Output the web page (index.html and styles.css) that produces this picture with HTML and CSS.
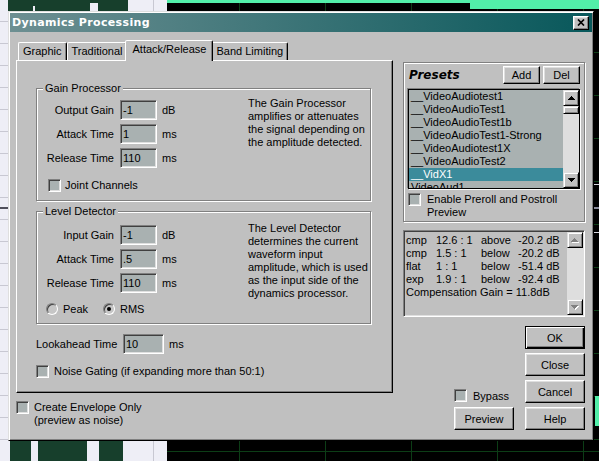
FILE: index.html
```html
<!DOCTYPE html>
<html lang="en">

<head>
    <meta charset="UTF-8">
    <meta name="viewport" content="width=device-width, initial-scale=1.0">
    <title>Dynamics Processing</title>
    <link rel="stylesheet" href="styles.css">
</head>

<body>

    <div class="dialog">
        <div class="titlebar">
            <span class="title">Dynamics Processing</span>
            <span class="close-btn">
                <svg width="8" height="7" viewBox="0 0 8 7"><path d="M1 0.5 7 6.5M7 0.5 1 6.5" stroke="#000" stroke-width="1.7"/></svg>
            </span>
        </div>
        <div class="client">
            <div class="left-col">
                <div class="tabs">
                    <div class="tab">Graphic</div>
                    <div class="tab">Traditional</div>
                    <div class="tab active">Attack/Release</div>
                    <div class="tab">Band Limiting</div>
                </div>
                <div class="tab-panel">
                    <div class="group gain-group">
                        <div class="group-label">Gain Processor</div>
                        <div class="group-body">
                            <div class="controls">
                                <div class="row"><span class="lbl">Output Gain</span><span class="field">-1</span><span class="unit">dB</span></div>
                                <div class="row"><span class="lbl">Attack Time</span><span class="field">1</span><span class="unit">ms</span></div>
                                <div class="row"><span class="lbl">Release Time</span><span class="field">110</span><span class="unit">ms</span></div>
                                <div class="row check-row"><span class="checkbox"></span>Joint Channels</div>
                            </div>
                            <p class="desc">The Gain Processor<br>amplifies or attenuates<br>the signal depending on<br>the amplitude detected.</p>
                        </div>
                    </div>
                    <div class="group level-group">
                        <div class="group-label">Level Detector</div>
                        <div class="group-body">
                            <div class="controls">
                                <div class="row"><span class="lbl">Input Gain</span><span class="field">-1</span><span class="unit">dB</span></div>
                                <div class="row"><span class="lbl">Attack Time</span><span class="field">.5</span><span class="unit">ms</span></div>
                                <div class="row"><span class="lbl">Release Time</span><span class="field">110</span><span class="unit">ms</span></div>
                                <div class="row radio-row">
                                    <span class="option"><span class="radio"></span>Peak</span>
                                    <span class="option"><span class="radio checked"></span>RMS</span>
                                </div>
                            </div>
                            <p class="desc">The Level Detector<br>determines the current<br>waveform input<br>amplitude, which is used<br>as the input side of the<br>dynamics processor.</p>
                        </div>
                    </div>
                    <div class="row lookahead-row">
                        <span class="lbl-wide">Lookahead Time</span><span class="field wide">10</span><span class="unit">ms</span>
                    </div>
                    <div class="row noise-row"><span class="checkbox"></span>Noise Gating (if expanding more than 50:1)</div>
                </div>
                <div class="envelope">
                    <span class="checkbox"></span>
                    <span class="envelope-text">Create Envelope Only<br>(preview as noise)</span>
                </div>
            </div>

            <div class="right-col">
                <div class="presets">
                    <div class="presets-head">
                        <span class="presets-title">Presets</span>
                        <span class="small-btn">Add</span>
                        <span class="small-btn">Del</span>
                    </div>
                    <div class="preset-list">
                        <div class="items">
                            <div class="item">__VideoAudiotest1</div>
                            <div class="item">__VideoAudioTest1</div>
                            <div class="item">__VideoAudioTest1b</div>
                            <div class="item">__VideoAudioTest1-Strong</div>
                            <div class="item">__VideoAudiotest1X</div>
                            <div class="item">__VideoAudioTest2</div>
                            <div class="item selected">__VidX1</div>
                            <div class="item">VideoAud1</div>
                        </div>
                        <div class="vscroll">
                            <span class="sb-btn"><svg width="7" height="4" viewBox="0 0 7 4"><path d="M3 0h1v1h1v1h1v1h1v1H0V3h1V2h1V1h1z"/></svg></span>
                            <span class="sb-thumb"></span>
                            <span class="sb-track"></span>
                            <span class="sb-btn"><svg width="7" height="4" viewBox="0 0 7 4"><path d="M0 0h7v1H6v1H5v1H4v1H3V3H2V2H1V1H0z"/></svg></span>
                        </div>
                    </div>
                    <div class="preroll">
                        <span class="checkbox"></span>
                        <span class="preroll-text">Enable Preroll and Postroll<br>Preview</span>
                    </div>
                </div>

                <div class="info-box">
                    <div class="info-text">
                        <span>cmp</span><span>12.6 : 1</span><span>above</span><span>-20.2 dB</span>
                        <span>cmp</span><span>1.5 : 1</span><span>below</span><span>-20.2 dB</span>
                        <span>flat</span><span>1 : 1</span><span>below</span><span>-51.4 dB</span>
                        <span>exp</span><span>1.9 : 1</span><span>below</span><span>-92.4 dB</span>
                        <span class="span-all">Compensation Gain = 11.8dB</span>
                    </div>
                    <div class="vscroll">
                        <span class="sb-btn"><svg width="8" height="5" viewBox="0 0 8 5"><path fill="#fff" d="M4 1h1v1h1v1h1v1h1v1H1V4h1V3h1V2h1z"/><path fill="#808080" d="M3 0h1v1h1v1h1v1h1v1H0V3h1V2h1V1h1z"/></svg></span>
                        <span class="sb-track"></span>
                        <span class="sb-btn"><svg width="8" height="5" viewBox="0 0 8 5"><path fill="#fff" d="M1 1h7v1H7v1H6v1H5v1H4V4H3V3H2V2H1z"/><path fill="#808080" d="M0 0h7v1H6v1H5v1H4v1H3V3H2V2H1V1H0z"/></svg></span>
                    </div>
                </div>

                <div class="actions">
                    <div class="side">
                        <div class="bypass"><span class="checkbox"></span>Bypass</div>
                        <span class="btn">Preview</span>
                    </div>
                    <div class="btn-stack">
                        <span class="btn default">OK</span>
                        <span class="btn">Close</span>
                        <span class="btn">Cancel</span>
                        <span class="btn">Help</span>
                    </div>
                </div>
            </div>
        </div>
    </div>

</body>

</html>
```

FILE: styles.css
```css
body {
    margin: 0;
    width: 599px;
    height: 461px;
    overflow: hidden;
    font-family: "Liberation Sans", Arial, sans-serif;
    font-size: 11px;
    color: #000;
    background:
        linear-gradient(#52efa9, #52efa9) 595px 396px / 4px 30px no-repeat,
        linear-gradient(#52efa9, #52efa9) 470px 0 / 129px 9px no-repeat,
        linear-gradient(#52efa9, #52efa9) 167px 0 / 303px 3px no-repeat,
        linear-gradient(#eeeef6, #eeeef6) 90px 3px / 8px 8px no-repeat,
        linear-gradient(#eeeef6, #eeeef6) 33px 6px / 2px 5px no-repeat,
        linear-gradient(#173f2c, #173f2c) 8px 0 / 120px 11px no-repeat,
        linear-gradient(#173f2c, #173f2c) 10px 441px / 21px 20px no-repeat,
        linear-gradient(#173f2c, #173f2c) 38px 441px / 49px 20px no-repeat,
        linear-gradient(#173f2c, #173f2c) 99px 441px / 24px 20px no-repeat,
        linear-gradient(#50505c, #50505c) 0 207px / 8px 2px no-repeat,
        linear-gradient(#c8c8d2, #c8c8d2) 153px 0 / 1px 100% no-repeat,
        repeating-linear-gradient(#eeeef6 0 21px, #c8c8d2 21px 22px) 0 0 / 167px 100% no-repeat,
        linear-gradient(#dadae2, #dadae2) 593px 184px / 6px 1px no-repeat,
        linear-gradient(#dadae2, #dadae2) 593px 232px / 6px 1px no-repeat,
        linear-gradient(#8a8c9c, #8a8c9c) 593px 207px / 6px 2px no-repeat,
        linear-gradient(#0c3d16, #0c3d16) 167px 451px / 432px 1px no-repeat,
        repeating-linear-gradient(to right, transparent 0 85px, #0c3d16 85px 86px) 154px 0 / 445px 100% no-repeat,
        repeating-linear-gradient(transparent 0 42px, #0c3d16 42px 43px) 167px 10px / 432px 100% no-repeat,
        #000;
}

/* window frame */
.dialog {
    box-sizing: border-box;
    width: 586px;
    height: 430px;
    margin: 11px 0 0 8px;
    padding: 1px;
    background-color: #c0c0c0;
    border: 1px solid;
    border-color: #dfdfdf #000 #000 #dfdfdf;
    box-shadow: inset 1px 1px #fff, inset -1px -1px #808080;
}

.titlebar {
    display: flex;
    align-items: center;
    justify-content: space-between;
    height: 19px;
    padding: 0 3px 0 2px;
    background: linear-gradient(to right, #6d8f92, #08585b);
}

.title {
    font-family: "DejaVu Sans", Verdana, sans-serif;
    font-size: 11px;
    font-weight: bold;
    letter-spacing: 0.35px;
    color: #fff;
}

.close-btn {
    box-sizing: border-box;
    display: flex;
    align-items: center;
    justify-content: center;
    width: 16px;
    height: 14px;
    background-color: #c0c0c0;
    border: 1px solid;
    border-color: #fff #000 #000 #fff;
    box-shadow: inset -1px -1px #808080, inset 1px 1px #dfdfdf;
}

.client {
    display: flex;
    gap: 10px;
    padding: 8px 7px 0 6px;
}

.left-col {
    width: 377px;
}

.right-col {
    width: 182px;
    margin-top: 22px;
}

/* tabs */
.tabs {
    display: flex;
    align-items: flex-end;
    height: 20px;
    padding-left: 2px;
}

.tab {
    box-sizing: border-box;
    height: 18px;
    padding: 0 4px;
    line-height: 17px;
    border: 1px solid;
    border-bottom: none;
    border-color: #fff #000 transparent #fff;
    border-radius: 2px 2px 0 0;
    box-shadow: inset -1px 0 #808080;
}

.tab.active {
    position: relative;
    z-index: 1;
    height: 21px;
    margin: 0 -2px -1px;
    padding: 0 6px;
    background-color: #c0c0c0;
}

.tab-panel {
    box-sizing: border-box;
    height: 333px;
    padding: 27px 0 0 19px;
    border: 1px solid;
    border-color: #fff #000 #000 #fff;
    box-shadow: inset -1px -1px #808080;
}

/* group boxes */
.group {
    width: 335px;
    box-sizing: border-box;
    border: 1px solid #808080;
    box-shadow: inset 1px 1px #fff, 1px 1px #fff;
}

.gain-group {
    padding-bottom: 3px;
}

.level-group {
    margin-top: 10px;
    padding-bottom: 2px;
}

.group-label {
    width: fit-content;
    margin: -7px 0 0 6px;
    padding: 0 2px;
    line-height: 13px;
    background-color: #c0c0c0;
}

.group-body {
    display: flex;
    padding-top: 3px;
}

.level-group .group-body {
    padding-top: 5px;
}

.controls {
    width: 211px;
}

.desc {
    margin: -1px 0 0;
    line-height: 13px;
}

.row {
    display: flex;
    align-items: center;
    height: 24px;
}

.lbl {
    width: 77px;
    margin-right: 6px;
    text-align: right;
}

.lbl-wide {
    width: 87px;
}

.field {
    box-sizing: border-box;
    width: 37px;
    height: 20px;
    padding-left: 2px;
    line-height: 18px;
    background-color: #a9b1b1;
    border: 1px solid;
    border-color: #808080 #fff #fff #808080;
    box-shadow: inset 1px 1px #404040, inset -1px -1px #dfdfdf;
}

.field.wide {
    width: 41px;
}

.unit {
    margin-left: 5px;
}

.checkbox {
    box-sizing: border-box;
    flex: none;
    width: 13px;
    height: 13px;
    background-color: #a9b1b1;
    border: 1px solid;
    border-color: #808080 #fff #fff #808080;
    box-shadow: inset 1px 1px #404040, inset -1px -1px #dfdfdf;
}

.check-row {
    gap: 4px;
    margin-top: 3px;
    padding-left: 11px;
}

.radio-row {
    margin-top: 2px;
    padding-left: 9px;
}

.option {
    display: flex;
    align-items: center;
    gap: 5px;
    width: 57px;
}

.radio {
    box-sizing: border-box;
    display: flex;
    align-items: center;
    justify-content: center;
    width: 12px;
    height: 12px;
    border-radius: 50%;
    border: 1px solid;
    border-color: #808080 #fff #fff #808080;
    box-shadow: inset 1px 1px #404040;
    background-color: #c6c6c6;
}

.radio.checked::after {
    content: "";
    width: 4px;
    height: 4px;
    border-radius: 50%;
    background-color: #000;
}

.lookahead-row {
    margin-top: 8px;
}

.noise-row {
    gap: 5px;
    margin-top: 3px;
}

.envelope {
    display: flex;
    align-items: flex-start;
    gap: 5px;
    margin-top: 8px;
}

.envelope-text {
    line-height: 13px;
}

/* presets */
.presets {
    box-sizing: border-box;
    height: 160px;
    padding: 3px 4px 0;
    border: 1px solid #808080;
    box-shadow: inset 1px 1px #fff, 1px 1px #fff;
}

.presets-head {
    display: flex;
    align-items: center;
    gap: 3px;
    height: 18px;
}

.presets-title {
    flex: 1;
    margin-left: 1px;
    font-family: "DejaVu Sans", Verdana, sans-serif;
    font-size: 12px;
    font-weight: bold;
    font-style: italic;
}

.small-btn,
.btn {
    box-sizing: border-box;
    display: flex;
    align-items: center;
    justify-content: center;
    background-color: #c0c0c0;
    border: 1px solid;
    border-color: #fff #000 #000 #fff;
    box-shadow: inset -1px -1px #808080, inset 1px 1px #dfdfdf;
}

.small-btn {
    width: 37px;
    height: 18px;
}

.preset-list {
    display: flex;
    box-sizing: border-box;
    height: 100px;
    margin-top: 5px;
    border: 1px solid #000;
    box-shadow: -1px -1px #808080, 1px 1px #fff;
}

.items {
    flex: 1;
    overflow: hidden;
    background-color: #a9b1b1;
}

.item {
    padding-left: 2px;
    line-height: 13px;
    white-space: nowrap;
}

.item.selected {
    background-color: #3b8b9b;
    color: #fff;
}

.vscroll {
    display: flex;
    flex-direction: column;
    width: 16px;
}

.sb-btn,
.sb-thumb {
    box-sizing: border-box;
    display: flex;
    align-items: center;
    justify-content: center;
    height: 16px;
    background-color: #c0c0c0;
    border: 1px solid;
    border-color: #dfdfdf #000 #000 #dfdfdf;
    box-shadow: inset 1px 1px #fff, inset -1px -1px #808080;
}

.sb-thumb {
    height: 8px;
}

.sb-track {
    flex: 1;
    background-color: #dedede;
}

.preroll {
    display: flex;
    align-items: flex-start;
    gap: 6px;
    margin-top: 4px;
}

.preroll-text {
    line-height: 13px;
}

/* summary box */
.info-box {
    display: flex;
    box-sizing: border-box;
    height: 87px;
    margin-top: 8px;
    padding: 1px;
    border: 1px solid;
    border-color: #808080 #fff #fff #808080;
    box-shadow: inset 1px 1px #404040, inset -1px -1px #dfdfdf;
}

.info-text {
    flex: 1;
    display: grid;
    grid-template-columns: 30px 45px 37px auto;
    align-content: start;
    padding: 2px 0 0 1px;
    line-height: 13px;
    white-space: nowrap;
}

.span-all {
    grid-column: 1 / -1;
}

/* buttons */
.actions {
    display: flex;
    justify-content: flex-end;
    align-items: flex-end;
    gap: 11px;
    margin-top: 9px;
}

.side {
    display: flex;
    flex-direction: column;
    align-items: flex-start;
    gap: 5px;
}

.bypass {
    display: flex;
    align-items: center;
    gap: 6px;
}

.btn-stack {
    display: flex;
    flex-direction: column;
    gap: 4px;
}

.btn {
    width: 60px;
    height: 23px;
}

.btn.default {
    border-color: #000;
    box-shadow: inset 1px 1px #fff, inset -1px -1px #000, inset -2px -2px #808080;
}
```
